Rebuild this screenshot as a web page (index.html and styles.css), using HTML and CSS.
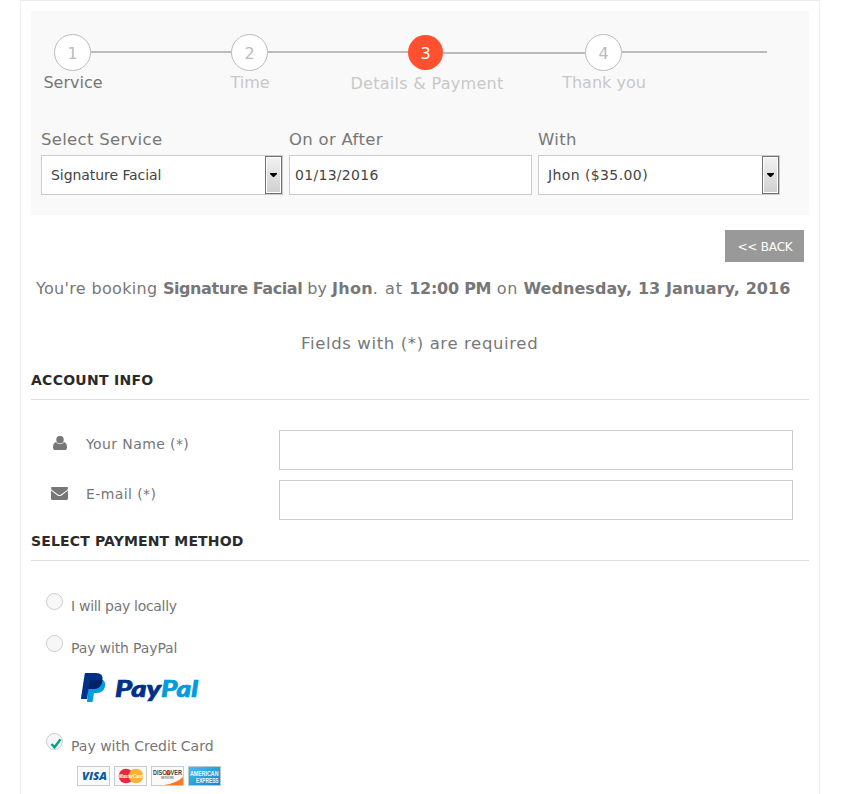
FILE: index.html
```html
<!DOCTYPE html>
<html lang="en">
<head>
<meta charset="utf-8">
<title>Booking</title>
<link rel="stylesheet" href="styles.css">
</head>
<body>
<main class="booking">
  <section class="panel">
    <ol class="steps">
      <li class="step step-first"><div class="track"><span class="circle">1</span><i class="line"></i></div><div class="caption"><span>Service</span></div></li>
      <li class="step"><div class="track"><span class="circle">2</span><i class="line"></i></div><div class="caption"><span>Time</span></div></li>
      <li class="step step-active"><div class="track"><span class="circle">3</span><i class="line"></i></div><div class="caption"><span>Details &amp; Payment</span></div></li>
      <li class="step step-last"><div class="track"><span class="circle">4</span><i class="line"></i></div><div class="caption"><span>Thank you</span></div></li>
    </ol>
    <div class="filters">
      <div class="filter">
        <label>Select Service</label>
        <div class="box select"><span class="value v-service">Signature Facial</span><span class="arrow"><svg width="7" height="4"><path d="M0 0H7V1L4 4H3L0 1Z"/></svg></span></div>
      </div>
      <div class="filter">
        <label>On or After</label>
        <div class="box date"><span class="value v-date">01/13/2016</span></div>
      </div>
      <div class="filter">
        <label>With</label>
        <div class="box select"><span class="value v-staff">Jhon ($35.00)</span><span class="arrow"><svg width="7" height="4"><path d="M0 0H7V1L4 4H3L0 1Z"/></svg></span></div>
      </div>
    </div>
  </section>

  <div class="actions"><button class="back">&lt;&lt; BACK</button></div>
  <p class="summary"><span class="intro">You're booking </span><b class="service">Signature Facial</b> by <b class="staff">Jhon</b><span class="at">. at </span><b class="time">12:00 PM</b><span class="on"> on </span><b class="day">Wednesday, 13 January, 2016</b></p>
  <p class="required"><span>Fields with (*) are required</span></p>

  <h3 class="heading h-account"><span>ACCOUNT INFO</span></h3>
  <div class="form">
    <div class="row">
      <span class="icon"><svg width="14" height="14" viewBox="0 0 14 14"><path d="M3 6Q7 9.500 11 6C13 6.500 14 8.500 14 11.500Q14 14 12 14H2Q0 14 0 11.500C0 8.500 1 6.500 3 6Z"/><ellipse cx="7" cy="3.800" rx="3.700" ry="3.900"/><path class="collar" d="M3.600 6.800Q7 9 10.400 6.800"/></svg></span>
      <label class="l-name">Your Name (*)</label><input type="text">
    </div>
    <div class="row">
      <span class="icon"><svg width="17" height="13" viewBox="0 0 17 13"><path d="M1 0H16Q17 0 17 1C17 2.300 15.900 3.200 14.500 4.200L10 7.400Q8.500 8.500 7 7.400L2.500 4.200C1.100 3.200 0 2.300 0 1Q0 0 1 0Z M0 3.600 6.500 8.400Q8.500 9.800 10.500 8.400L17 3.600V11.500Q17 13 15.500 13H1.500Q0 13 0 11.500Z"/></svg></span>
      <label class="l-mail">E-mail (*)</label><input type="text">
    </div>
  </div>

  <h3 class="heading h-payment"><span>SELECT PAYMENT METHOD</span></h3>
  <div class="methods">
    <div class="method"><span class="radio"></span><label class="m-local">I will pay locally</label></div>
    <div class="method"><span class="radio"></span><label class="m-paypal">Pay with PayPal</label></div>
    <svg class="paypal" width="120" height="32" viewBox="0 0 120 32">
      <path fill="#009cde" d="M9 8H23Q26 10 25 14.500Q23.500 21 17 21H14L12.500 30H7Z"/>
      <path fill="#003087" d="M5.500 1H16Q23.500 1 22.500 8Q21.300 17 13 17H8.500L7 27H1.500Q1 27 1 26L4.700 2Q4.800 1 5.500 1Z"/>
      <path fill="#012169" d="M11 8H22.500Q21.300 17 13 17H8.500L9.800 9Q10 8 11 8Z"/>
      <text class="brand" x="35" y="24.500" textLength="46" lengthAdjust="spacingAndGlyphs" fill="#003087" stroke="#003087">Pay</text>
      <text class="brand" x="81" y="24.500" textLength="37" lengthAdjust="spacingAndGlyphs" fill="#009cde" stroke="#009cde">Pal</text>
    </svg>
    <div class="method method-card"><span class="radio"><svg width="12" height="11" viewBox="0 0 12 11"><path d="M1.500 6 4.500 9.300 10.500 1.200" fill="none" stroke="#00a383" stroke-width="2.400"/></svg></span><label class="m-card">Pay with Credit Card</label></div>
    <div class="cards">
      <svg width="33" height="20" viewBox="0 0 33 20"><rect x=".5" y=".5" width="32" height="19" fill="#fafafa" stroke="#c9cccf"/><text class="visa" x="5" y="14" textLength="25" lengthAdjust="spacingAndGlyphs">VISA</text></svg>
      <svg width="33" height="20" viewBox="0 0 33 20"><rect x=".5" y=".5" width="32" height="19" fill="#fafafa" stroke="#c9cccf"/><circle cx="12" cy="10" r="7.300" fill="#e6293f"/><circle cx="22" cy="10" r="7.300" fill="#fcb131"/><text class="mc" x="5" y="12" textLength="24" lengthAdjust="spacingAndGlyphs">MasterCard</text></svg>
      <svg width="33" height="20" viewBox="0 0 33 20"><rect x=".5" y=".5" width="32" height="19" fill="#fafafa" stroke="#c9cccf"/><path fill="#f47b2a" d="M13 19Q25 17.500 32 11V19Z"/><circle cx="17" cy="7" r="2.500" fill="#f47b2a"/><text class="disc" x="2" y="9" textLength="29" lengthAdjust="spacingAndGlyphs">DISCOVER</text><text class="net" x="10" y="12.500" textLength="13">NETWORK</text></svg>
      <svg width="33" height="20" viewBox="0 0 33 20"><defs><linearGradient id="amex" x2="1" y2="1"><stop offset="0" stop-color="#45bdec"/><stop offset="1" stop-color="#1684ca"/></linearGradient></defs><rect x=".5" y=".5" width="32" height="19" fill="url(#amex)" stroke="#b9cad2"/><text class="amex" x="2" y="9.500" textLength="28.500" lengthAdjust="spacingAndGlyphs">AMERICAN</text><text class="amex" x="8" y="16.500" textLength="22.500" lengthAdjust="spacingAndGlyphs">EXPRESS</text></svg>
    </div>
  </div>
</main>
</body>
</html>
```
FILE: styles.css
```css
* { box-sizing: border-box; }
body { margin: 0; background: #fff; color: #777; font: 16px/20px "DejaVu Sans", Verdana, sans-serif; overflow: hidden; }
svg { display: block; }
.booking { width: 800px; height: 810px; margin-left: 20px; padding: 10px; border: 1px solid #ececec; }
.panel { height: 204px; padding: 23px 10px 0; background: #f9f9f9; }
.steps { display: flex; list-style: none; margin: 0 0 0 13px; padding: 0; height: 96px; }
.step { width: 177px; }
.step-last { width: 182px; }
.track { display: flex; align-items: center; height: 37px; }
.circle { width: 37px; height: 37px; border: 1px solid #bbb; border-radius: 50%; background: #fff; color: #bbb; line-height: 37px; text-align: center; flex: none; }
.line { height: 2px; background: #bbb; flex: 1; margin-bottom: 1px; }
.step-active .circle { width: 35px; height: 35px; border: 0; background: #ff5030; color: #fff; line-height: 37px; }
.step-active .line { margin-bottom: 0; }
.caption { display: flex; justify-content: center; width: 38px; margin-top: 2px; color: #c8c8c8; white-space: nowrap; }
.step-first .caption { color: #777; }
.step-active .caption { margin-top: 3px; letter-spacing: .3px; }
.filters { display: grid; grid-template-columns: 242px 243px 242px; gap: 6px; }
.filter label { display: block; height: 25px; font-size: 16.500px; line-height: 20px; white-space: nowrap; letter-spacing: .3px; }
.box { display: flex; align-items: center; height: 40px; border: 1px solid #ccc; background: #fff; color: #444; font-size: 14px; white-space: nowrap; }
.select { justify-content: space-between; padding-left: 9px; }
.date { padding-left: 5px; }
.v-service { letter-spacing: -.06px; }
.v-date { letter-spacing: .3px; }
.v-staff { letter-spacing: .4px; }
.arrow { display: flex; align-items: center; justify-content: center; width: 17px; height: 38px; border: 1px solid #707070; box-shadow: inset 0 0 0 1px #fff; background: linear-gradient(#f2f2f2, #cfcfcf); }
.arrow path { fill: #000; }
.actions { display: flex; justify-content: flex-end; padding: 15px 5px 0 0; }
.back { width: 79px; height: 32px; padding: 2px 0 0 1px; border: 0; background: #999; color: #fff; font: 12px "DejaVu Sans", Verdana, sans-serif; letter-spacing: -.2px; }
.summary { margin: 17px 0 0 5px; white-space: pre; }
.intro { letter-spacing: .33px; }
.service { letter-spacing: -.42px; }
.staff { letter-spacing: .25px; }
.at { letter-spacing: 1px; }
.time { letter-spacing: -.25px; }
.on { letter-spacing: .5px; }
.day { letter-spacing: .07px; }
.required { margin: 35px 0 0 270px; font-size: 16.500px; letter-spacing: .63px; }
.heading { height: 30px; margin: 16px 0 0; border-bottom: 1px solid #ddd; color: #2b2b2b; font-size: 14px; line-height: 20px; letter-spacing: .27px; }
.form { display: grid; gap: 10px; padding: 30px 16px 0 14px; }
.row { display: grid; grid-template-columns: 29px 205px 514px; height: 40px; font-size: 14px; }
.icon { display: flex; justify-content: center; align-items: center; height: 26px; }
.row + .row .icon { height: 27px; }
.icon path, .icon ellipse { fill: #777; }
.icon .collar { fill: none; stroke: #fff; stroke-width: .6; }
.row label { padding: 4px 0 0 12px; letter-spacing: .4px; }
.row input { width: 100%; height: 40px; border: 1px solid #ccc; background: #fff; }
.h-payment { margin-top: 11px; letter-spacing: .15px; }
.methods { padding: 32px 15px 0; font-size: 14px; }
.method { display: flex; height: 28px; gap: 8px; margin-bottom: 14px; }
.method label { padding-top: 3px; white-space: nowrap; }
.m-local { letter-spacing: -.3px; }
.m-paypal { letter-spacing: -.13px; }
.radio { display: flex; align-items: center; justify-content: center; flex: none; width: 17px; height: 17px; border: 1px solid #ccc; border-radius: 50%; background: #f7f7f7; padding: 3px 0 0 2px; }
.paypal { margin: -5px 0 0 34px; }
.brand { font: italic 900 23px Lato, sans-serif; stroke-width: .7; }
.method-card { margin: 29px 0 0; }
.cards { display: flex; gap: 4px; margin: 5px 0 0 31px; }
.visa { font: italic 800 11px "Open Sans", sans-serif; fill: #0c5b9e; }
.mc { font: italic bold 5px "Liberation Sans", sans-serif; fill: #fff; }
.disc { font: bold 7px "Liberation Sans", sans-serif; fill: #444; }
.net { font: 3px "Liberation Sans", sans-serif; fill: #555; }
.amex { font: bold 6.500px "Liberation Sans", sans-serif; fill: #eafaff; }
```
